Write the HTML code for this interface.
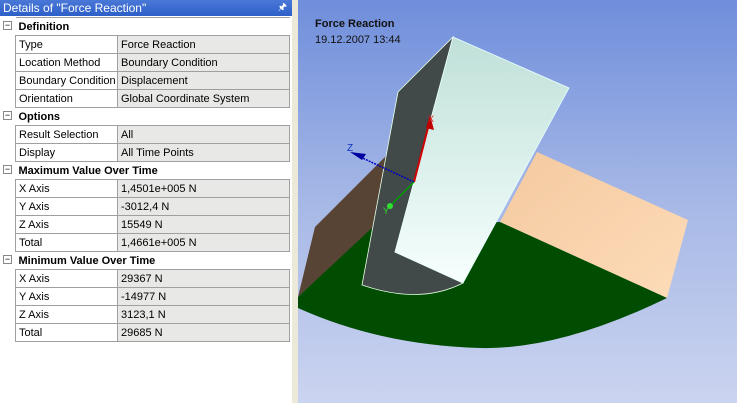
<!DOCTYPE html>
<html><head><style>
body{margin:0;width:737px;height:403px;overflow:hidden;font-family:"Liberation Sans",sans-serif;font-size:11px;background:#fff;position:relative}
#title{position:absolute;left:0;top:0;width:292px;height:16px;background:linear-gradient(#4a78d8,#2c5fc8);color:#fff;font-size:12px;line-height:16px;padding-left:3px;box-sizing:border-box}
#pin{position:absolute;right:5px;top:0;color:#fff;font-size:10px}
#panel{position:absolute;left:0;top:16px;width:292px;height:387px;background:#fff;border-right:1px solid #888}
#sep{position:absolute;left:292px;top:0;width:6px;height:403px;background:#ece9d8;border-right:1px solid #7f9db9}
table{position:absolute;left:15px;top:1px;border-collapse:collapse;width:275px;table-layout:fixed}
td{height:17px;border:1px solid #a0a0a0;padding:0 0 0 3px;white-space:nowrap;overflow:hidden;font-size:11px}
td.k{width:98px}
td.v{background:#e8e8e6}
tr.h td{font-weight:bold;border-left:none;border-right:none;background:#fff}
.box{position:absolute;left:3px;width:9px;height:9px;border:1px solid #888;box-sizing:border-box;font-size:9px;line-height:6px;text-align:center;background:#fff}
#vp{position:absolute;left:298px;top:0;width:439px;height:403px;background:linear-gradient(#6f8edb,#a6b8e6 50%,#cbd4f0)}
</style></head><body>
<div id="title">Details of "Force Reaction"<span id="pin">&#x1F588;</span></div>
<div id="panel">
<div class="box" style="top:5px">−</div>
<div class="box" style="top:95px">−</div>
<div class="box" style="top:149px">−</div>
<div class="box" style="top:239px">−</div>
<table>
<colgroup><col style="width:102px"><col></colgroup>
<tr class="h"><td colspan="2">Definition</td></tr>
<tr><td>Type</td><td class="v">Force Reaction</td></tr>
<tr><td>Location Method</td><td class="v">Boundary Condition</td></tr>
<tr><td>Boundary Condition</td><td class="v">Displacement</td></tr>
<tr><td>Orientation</td><td class="v">Global Coordinate System</td></tr>
<tr class="h"><td colspan="2">Options</td></tr>
<tr><td>Result Selection</td><td class="v">All</td></tr>
<tr><td>Display</td><td class="v">All Time Points</td></tr>
<tr class="h"><td colspan="2">Maximum Value Over Time</td></tr>
<tr><td>X Axis</td><td class="v">1,4501e+005 N</td></tr>
<tr><td>Y Axis</td><td class="v">-3012,4 N</td></tr>
<tr><td>Z Axis</td><td class="v">15549 N</td></tr>
<tr><td>Total</td><td class="v">1,4661e+005 N</td></tr>
<tr class="h"><td colspan="2">Minimum Value Over Time</td></tr>
<tr><td>X Axis</td><td class="v">29367 N</td></tr>
<tr><td>Y Axis</td><td class="v">-14977 N</td></tr>
<tr><td>Z Axis</td><td class="v">3123,1 N</td></tr>
<tr><td>Total</td><td class="v">29685 N</td></tr>
</table>
</div>
<div id="sep"></div>
<div id="vp"></div>
<svg style="position:absolute;left:0;top:0" width="737" height="403">
<defs>
<linearGradient id="lg" x1="0" y1="0" x2="0" y2="1"><stop offset="0" stop-color="#bfe0d8"/><stop offset="1" stop-color="#f7fffe"/></linearGradient>
<linearGradient id="pg" x1="0" y1="0" x2="1" y2="1"><stop offset="0" stop-color="#f4c9a0"/><stop offset="1" stop-color="#fddcb8"/></linearGradient>
</defs>
<polygon points="298,297 315,227 387,155 375,227" fill="#574434"/>
<polygon points="537,152 688,220 667,298 500,222" fill="url(#pg)"/>
<path d="M298,297 L373,227 L500,222 L667,298 Q560,350 480,348 Q380,345 298,308 Z" fill="#004c00"/>
<path d="M398,92 L453,37 L395,252 L463,283 Q420,305 362,285 Z" fill="#414a48" stroke="#e8ffe8" stroke-width="0.8"/>
<polygon points="453,37 569,88 463,283 395,252" fill="url(#lg)" stroke="#e8ffff" stroke-width="0.8"/>
<line x1="414" y1="182" x2="430" y2="120" stroke="#d00000" stroke-width="2"/>
<polygon points="430,115 434,130 426,128" fill="#c00000"/>
<text x="428" y="122" fill="#e02020" font-size="9" font-family="Liberation Sans">X</text>
<line x1="414" y1="182" x2="356" y2="155" stroke="#0000c0" stroke-width="1.5" stroke-dasharray="2,1"/>
<polygon points="350,152 366,154 362,160" fill="#0000a0"/>
<text x="347" y="151" fill="#1030c0" font-size="10" font-family="Liberation Sans">Z</text>
<line x1="414" y1="182" x2="390" y2="206" stroke="#00a000" stroke-width="1.5"/>
<circle cx="390" cy="206" r="3" fill="#30e030"/>
<text x="383" y="214" fill="#30e030" font-size="9" font-family="Liberation Sans">Y</text>
<text x="315" y="27" font-weight="bold" font-size="11" fill="#111" font-family="Liberation Sans">Force Reaction</text>
<text x="315" y="43" font-size="11" fill="#111" font-family="Liberation Sans">19.12.2007 13:44</text>
</svg>
</body></html>
